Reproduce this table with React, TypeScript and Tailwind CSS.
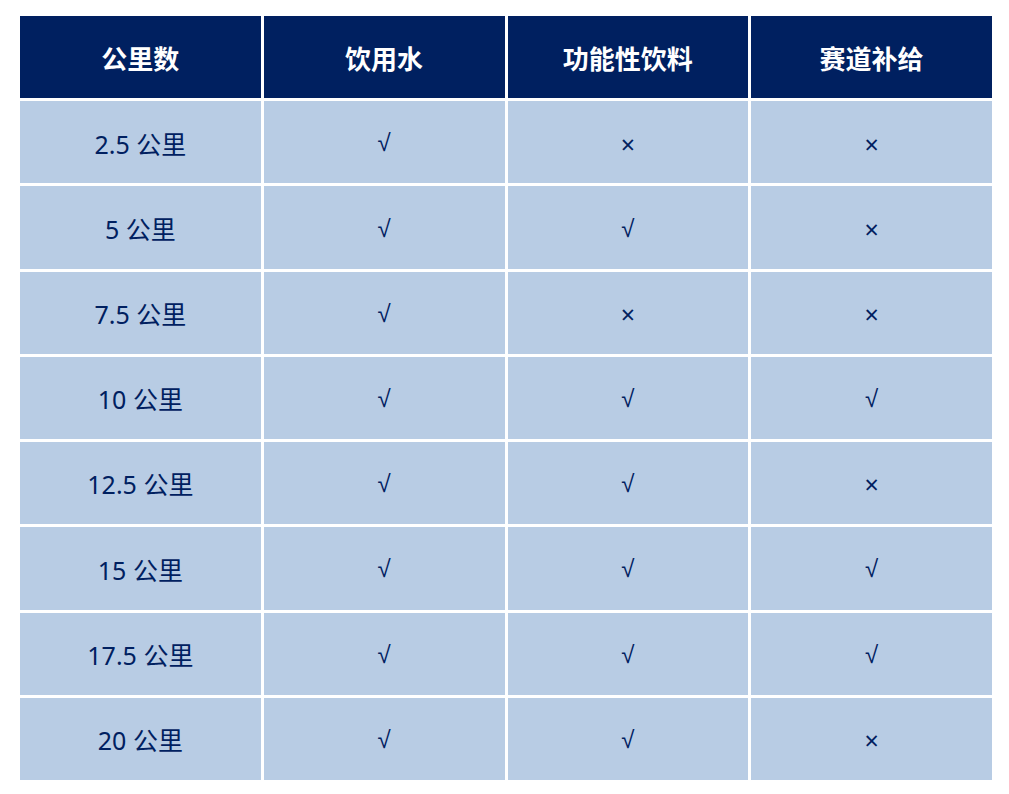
import React from "react";

const header = ["公里数", "饮用水", "功能性饮料", "赛道补给"];
const rows: string[][] = [
  ["2.5 公里", "√", "×", "×"],
  ["5 公里", "√", "√", "×"],
  ["7.5 公里", "√", "×", "×"],
  ["10 公里", "√", "√", "√"],
  ["12.5 公里", "√", "√", "×"],
  ["15 公里", "√", "√", "√"],
  ["17.5 公里", "√", "√", "√"],
  ["20 公里", "√", "√", "×"],
];

export default function App() {
  return (
    <div className="w-[1009px] h-[794px] bg-white pt-[16px] pl-[20px]" style={{ fontFamily: '"Noto Sans", "Noto Sans CJK SC", sans-serif' }}>
      <div className="grid grid-cols-4 grid-rows-9 gap-[3px] w-[972px] h-[764px]">
        {header.map((h) => (
          <div key={h} className="bg-[#002060] text-white font-bold text-[26px] flex items-center justify-center pt-[4px]">
            {h}
          </div>
        ))}
        {rows.map((r, i) =>
          r.map((c, j) => (
            <div
              key={i + "-" + j}
              className={
                "bg-[#b8cce4] text-[#002060] flex items-center justify-center " +
                (c === "√" ? "font-['Liberation_Sans'] text-[24px] pt-[2px]" : "text-[25px] pt-[4px]")
              }
            >
              {c}
            </div>
          ))
        )}
      </div>
    </div>
  );
}
